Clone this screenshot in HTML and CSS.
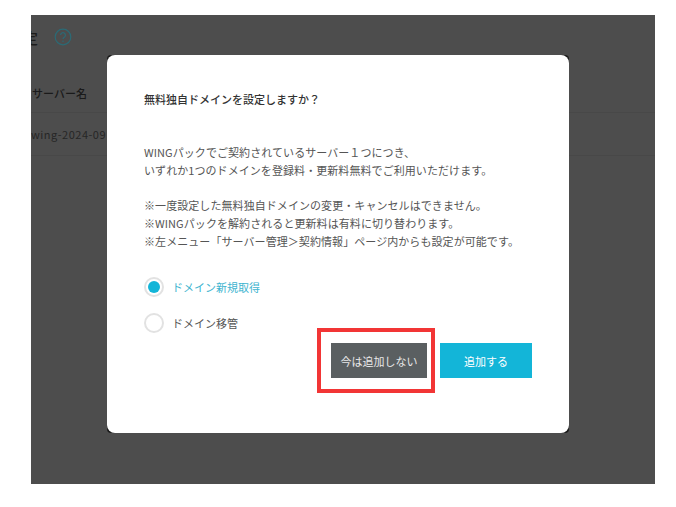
FILE: index.html
```html
<!DOCTYPE html>
<html lang="ja">
<head>
	<meta charset="UTF-8">
	<meta name="viewport" content="width=device-width, initial-scale=1.0">
	<title>無料独自ドメイン</title>
	<link rel="stylesheet" href="styles.css">
</head>
<body class="body">
	<div class="screen">
		<header class="page-head">
			<h1 class="page-head__title">設定</h1>
			<svg class="page-head__help" width="18" height="18" viewBox="0 0 18 18" aria-hidden="true">
				<circle cx="9" cy="9" r="7.8" fill="none" stroke="#2b6a75" stroke-width="1.2"/>
				<path d="M6.6 7.1a2.4 2.4 0 1 1 3.6 2.1c-.8.5-1.2.9-1.2 1.9" fill="none" stroke="#2b6a75" stroke-width="1.2"/>
				<circle cx="9" cy="13.3" r=".8" fill="#2b6a75"/>
			</svg>
		</header>
		<table class="table">
			<tr class="table__row table__row--head"><th class="table__cell">サーバー名</th></tr>
			<tr class="table__row"><td class="table__cell">wing-2024-09</td></tr>
		</table>

		<div class="overlay">
			<div class="dialog-frame">
				<section class="dialog">
					<h2 class="dialog__title">無料独自ドメインを設定しますか？</h2>
					<p class="dialog__text">WINGパックでご契約されているサーバー１つにつき、<br>いずれか1つのドメインを登録料・更新料無料でご利用いただけます。</p>
					<p class="dialog__text dialog__text--notes">※一度設定した無料独自ドメインの変更・キャンセルはできません。<br>※WINGパックを解約されると更新料は有料に切り替わります。<br>※左メニュー「サーバー管理＞契約情報」ページ内からも設定が可能です。</p>
					<div class="choices">
						<div class="choice choice--on"><span class="choice__mark"></span>ドメイン新規取得</div>
						<div class="choice"><span class="choice__mark"></span>ドメイン移管</div>
					</div>
					<div class="actions">
						<div class="button button--grey">今は追加しない<span class="highlight"></span></div>
						<div class="button button--blue">追加する</div>
					</div>
				</section>
			</div>
		</div>
	</div>
</body>
</html>
```

FILE: styles.css
```css
:root {
	--blue: #13b5d8;
	--text: #555;
}

*,
*::before,
*::after {
	box-sizing: border-box;
}

.body {
	margin: 0;
	min-height: 507px;
	padding: 15px 21px 23px 31px;
	background: #fff;
	color: var(--text);
	font-family: "Noto Sans CJK JP", "Noto Sans", sans-serif;
	font-size: 11px;
}

.screen {
	position: relative;
	height: 469px;
	overflow: hidden;
	background: #4d4d4d;
}

.page-head {
	display: flex;
	align-items: center;
	gap: 16px;
	height: 44px;
	margin-left: -15px;
}

.page-head__title {
	margin: 0;
	width: 22px;
	overflow: hidden;
	white-space: nowrap;
	direction: rtl;
	color: #1c1c1c;
	font-size: 15px;
	font-weight: 500;
}

.page-head__help {
	flex: none;
}

.table {
	width: 100%;
	margin-top: 10px;
	border-collapse: collapse;
	color: #222;
}

.table__row {
	border-bottom: 1px solid #484848;
}

.table__row--head {
	color: #1a1a1a;
}

.table__cell {
	height: 43px;
	padding: 0;
	font-size: 11px;
	font-weight: 500;
	text-align: left;
}

th.table__cell {
	padding: 5px 0 0 1px;
}

td.table__cell {
	color: #262626;
	font-weight: 400;
	letter-spacing: .5px;
}

.overlay {
	position: absolute;
	inset: 0;
	padding: 40px 86px 51px 76px;
}

.dialog-frame {
	height: 378px;
	background: #1c1c1c;
	border-radius: 4px;
}

.dialog {
	height: 100%;
	padding: 35px 37px 0;
	background: #fff;
	border-radius: 8px;
}

.dialog__title {
	margin: 0;
	color: #333;
	font-size: 11px;
	font-weight: 500;
	line-height: 18px;
}

.dialog__text {
	margin: 35px 0 0;
	line-height: 18px;
	letter-spacing: .07px;
	white-space: nowrap;
}

.dialog__text--notes {
	margin-top: 17px;
}

.choices {
	display: flex;
	flex-direction: column;
	gap: 16px;
	margin-top: 27px;
}

.choice {
	display: flex;
	align-items: center;
	gap: 8px;
	height: 20px;
}

.choice--on {
	color: #3eb4cf;
}

.choice__mark {
	display: flex;
	align-items: center;
	justify-content: center;
	width: 20px;
	height: 20px;
	border: 2px solid #e2e2e2;
	border-radius: 50%;
}

.choice--on .choice__mark::before {
	content: "";
	width: 12px;
	height: 12px;
	border-radius: 50%;
	background: var(--blue);
}

.actions {
	display: flex;
	justify-content: flex-end;
	gap: 13px;
	margin-top: 10px;
}

.button {
	position: relative;
	display: flex;
	align-items: center;
	justify-content: center;
	height: 35px;
	color: #fff;
}

.button--grey {
	width: 96px;
	background: #5a5f61;
	color: #e8e8e8;
}

.button--blue {
	width: 92px;
	background: var(--blue);
}

.highlight {
	position: absolute;
	inset: -15px -8px -15px -14px;
	border: 4px solid #f23535;
}
```
